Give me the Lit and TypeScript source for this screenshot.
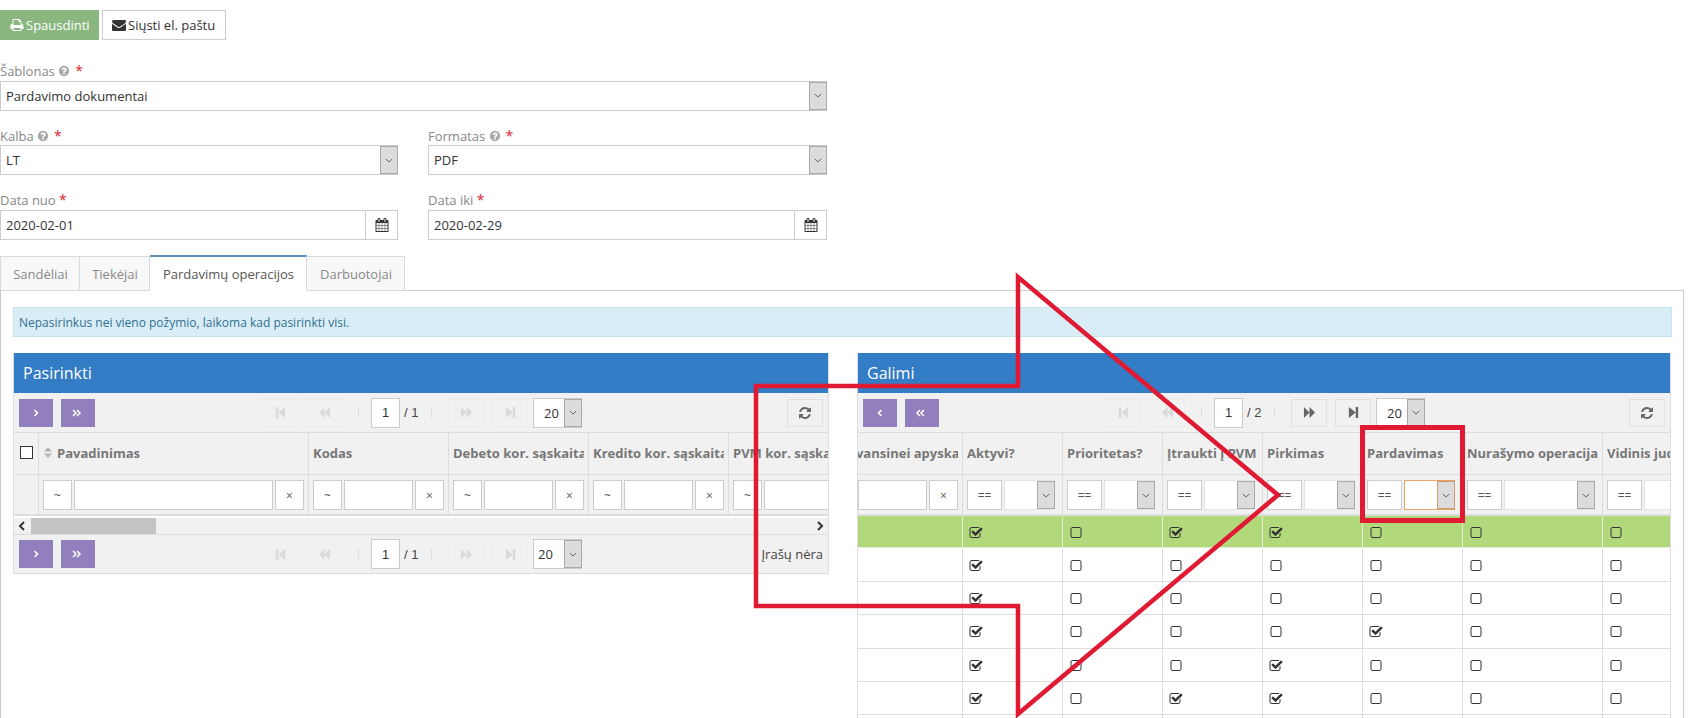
import { LitElement, html, css, svg } from "lit";
import { customElement } from "lit/decorators.js";

const P = {
  print: "M448 1536h896v-256h-896v256zm0-640h896v-384h-160q-40 0-68-28t-28-68v-160h-640v640zm1152 64q0-26-19-45t-45-19-45 19-19 45 19 45 45 19 45-19 19-45zm128 0v416q0 13-9.500 22.500t-22.500 9.500h-224v160q0 40-28 68t-68 28h-960q-40 0-68-28t-28-68v-160h-224q-13 0-22.500-9.500t-9.500-22.500v-416q0-79 56.500-135.500t135.500-56.500h64v-544q0-40 28-68t68-28h672q40 0 88 20t76 48l152 152q28 28 48 76t20 88v256h64q79 0 135.500 56.500t56.500 135.500z",
  mail: "M1792 710v794q0 66-47 113t-113 47h-1472q-66 0-113-47t-47-113v-794q44 49 101 87 362 246 497 345 57 42 92.500 65.500t94.500 48 110 24.500h2q51 0 110-24.500t94.500-48 92.500-65.500q170-123 498-345 57-39 100-87zm0-294q0 79-49 151t-122 123q-376 261-468 325-10 7-42.500 30.500t-54 38-52 32.500-57.500 27-50 9h-2q-23 0-50-9t-57.500-27-52-32.500-54-38-42.500-30.500q-91-64-262-182.500t-205-142.500q-62-42-117-115.500t-55-136.500q0-78 41.500-130t118.500-52h1472q65 0 112.500 47t47.500 113z",
  cal: "M192 1664h288v-288h-288v288zm352 0h320v-288h-320v288zm-352-352h288v-320h-288v320zm352 0h320v-320h-320v320zm-352-384h288v-288h-288v288zm736 736h320v-288h-320v288zm-384-736h320v-288h-320v288zm768 736h288v-288h-288v288zm-384-352h320v-320h-320v320zm-352-864v-288q0-13-9.500-22.500t-22.500-9.500h-64q-13 0-22.500 9.500t-9.500 22.500v288q0 13 9.500 22.500t22.500 9.500h64q13 0 22.500-9.500t9.500-22.500zm736 864h288v-320h-288v320zm-384-384h320v-288h-320v288zm384 0h288v-288h-288v288zm32-480v-288q0-13-9.500-22.500t-22.500-9.500h-64q-13 0-22.500 9.500t-9.500 22.500v288q0 13 9.500 22.500t22.500 9.500h64q13 0 22.500-9.500t9.500-22.500zm384-64v1280q0 52-38 90t-90 38h-1408q-52 0-90-38t-38-90v-1280q0-52 38-90t90-38h128v-96q0-66 47-113t113-47h64q66 0 113 47t47 113v96h384v-96q0-66 47-113t113-47h64q66 0 113 47t47 113v96h128q52 0 90 38t38 90z",
  help: "M1024 1376v-192q0-14-9-23t-23-9h-192q-14 0-23 9t-9 23v192q0 14 9 23t23 9h192q14 0 23-9t9-23zm256-672q0-88-55.500-163t-138.500-116-170-41q-243 0-371 213-15 24 8 42l132 100q7 6 19 6 16 0 25-12 53-68 86-92 34-24 86-24 48 0 85.500 26t37.500 59q0 38-20 61t-68 45q-63 28-115.500 86.500t-52.500 125.500v36q0 14 9 23t23 9h192q14 0 23-9t9-23q0-19 21.500-49.500t54.500-49.500q32-18 49-28.500t46-35 44.500-48 28-60.500 12.500-81zm384 192q0 209-103 385.500t-279.500 279.500-385.500 103-385.500-103-279.500-279.500-103-385.500 103-385.500 279.500-279.500 385.500-103 385.500 103 279.500 279.500 103 385.500z",
  refresh: "M1639 1056q0 5-1 7-64 268-268 434.500t-478 166.500q-146 0-282.500-55t-243.500-157l-129 129q-19 19-45 19t-45-19-19-45v-448q0-26 19-45t45-19h448q26 0 45 19t19 45-19 45l-137 137q71 66 161 102t187 36q134 0 250-65t186-179q11-17 53-117 8-23 30-23h192q13 0 22.500 9.500t9.500 22.500zm25-800v448q0 26-19 45t-45 19h-448q-26 0-45-19t-19-45 19-45l138-138q-148-137-349-137-134 0-250 65t-186 179q-11 17-53 117-8 23-30 23h-199q-13 0-22.500-9.500t-9.500-22.500v-7q65-268 270-434.500t480-166.500q146 0 284 55.500t245 156.500l130-129q19-19 45-19t45 19 19 45z",
  check: "M1472 930v318q0 119-84.500 203.500t-203.500 84.500h-832q-119 0-203.500-84.500t-84.500-203.500v-832q0-119 84.500-203.500t203.500-84.500h832q63 0 117 25 15 7 18 23 3 17-9 29l-49 49q-10 10-23 10-3 0-9-2-23-6-45-6h-832q-66 0-113 47t-47 113v832q0 66 47 113t113 47h832q66 0 113-47t47-113v-254q0-13 9-22l64-64q10-10 23-10 6 0 12 3 20 8 20 29zm231-489l-814 814q-24 24-57 24t-57-24l-430-430q-24-24-24-57t24-57l110-110q24-24 57-24t57 24l263 263 647-647q24-24 57-24t57 24l110 110q24 24 24 57t-24 57z",
  box: "M1312 256h-832q-66 0-113 47t-47 113v832q0 66 47 113t113 47h832q66 0 113-47t47-113v-832q0-66-47-113t-113-47zm288 160v832q0 119-84.500 203.500t-203.500 84.500h-832q-119 0-203.500-84.500t-84.500-203.500v-832q0-119 84.500-203.500t203.500-84.500h832q119 0 203.500 84.500t84.500 203.500z",
  first: "M2 1h2.600v12H2zM12 1v12L4.600 7z",
  prev: "M7 1v12L1 7zM13 1v12L7 7z",
  next: "M1 1v12l6-6zM7 1v12l6-6z",
  last: "M2 1v12l7.400-6zM9.400 1H12v12H9.400z",
};

const fa = (d: string, cls: string) =>
  html`<svg class=${cls} viewBox="0 0 1792 1792">${svg`<path d=${d}></path>`}</svg>`;
const nav = (d: string, off: boolean) =>
  html`<div class="navbtn ${off ? "off" : ""}"><svg class="navico" viewBox="0 0 14 14">${svg`<path d=${d}></path>`}</svg></div>`;
const chev = (pts: string) =>
  html`<svg class="chev" viewBox="0 0 10 10">${svg`<polyline points=${pts}></polyline>`}</svg>`;
const arrow = html`<span class="arrow"><svg class="dn" viewBox="0 0 10 6">${svg`<polyline points="1,1 5,5 9,1"></polyline>`}</svg></span>`;

const select = (text: string, extra = "") =>
  html`<div class="select ${extra}"><span class="seltext">${text}</span>${arrow}</div>`;

const dateField = (label: string, value: string) => html`
  <div class="field">
    <div class="label">${label} <span class="req">*</span></div>
    <div class="dateinput"><span class="seltext">${value}</span><span class="addon">${fa(P.cal, "calico")}</span></div>
  </div>`;
const selField = (label: string, value: string, cls = "") => html`
  <div class="field ${cls}">
    <div class="label">${label} ${fa(P.help, "helpico")}<span class="req gap">*</span></div>
    ${select(value, "big")}
  </div>`;

const pager = (total: string, enabledNext: boolean, footer: boolean) => html`
  <div class="pager">
    <div class="navs">${nav(P.first, true)}${nav(P.prev, true)}</div>
    <span class="sep lead"></span>
    <div class="pageinput">1</div>
    <span class="total">/ ${total}</span>
    <span class="sep trail"></span>
    <div class="navs">${nav(P.next, !enabledNext)}${nav(P.last, !enabledNext)}</div>
    ${select("20", footer ? "size foot" : "size")}
  </div>`;

const moveBtns = (left: boolean) => html`
  <div class="moves">
    <div class="move">${chev(left ? "6.500,2 3.500,5 6.500,8" : "3.500,2 6.500,5 3.500,8")}</div>
    <div class="move">${left ? chev("5,2 2,5 5,8") : chev("2,2 5,5 2,8")}${left ? chev("5,2 2,5 5,8") : chev("2,2 5,5 2,8")}</div>
  </div>`;

const textFilter = html`<div class="filter"><div class="fbtn op">~</div><div class="finput"></div><div class="fbtn x">×</div></div>`;
const boolFilter = (focus = false) =>
  html`<div class="filter"><div class="fbtn eq">==</div>${select("", focus ? "fsel focus" : "fsel")}</div>`;

const leftCols = [
  { w: 270, t: "Pavadinimas", sort: true },
  { w: 140, t: "Kodas" },
  { w: 140, t: "Debeto kor. sąskaita" },
  { w: 140, t: "Kredito kor. sąskaita" },
  { w: 140, t: "PVM kor. sąskaita" },
];

const rightCols = [
  { w: 100, t: "Aktyvi?" },
  { w: 100, t: "Prioritetas?" },
  { w: 100, t: "Įtraukti į PVM" },
  { w: 100, t: "Pirkimas" },
  { w: 100, t: "Pardavimas" },
  { w: 140, t: "Nurašymo operacija" },
  { w: 100, t: "Vidinis judėjimas" },
];
const rightRows = [
  [1, 0, 1, 1, 0, 0, 0],
  [1, 0, 0, 0, 0, 0, 0],
  [1, 0, 0, 0, 0, 0, 0],
  [1, 0, 0, 0, 1, 0, 0],
  [1, 0, 0, 1, 0, 0, 0],
  [1, 0, 1, 1, 0, 0, 0],
  [1, 0, 0, 0, 0, 0, 0],
];

@customElement("app-root")
export class AppRoot extends LitElement {
  static styles = css`
    :host {
      display: block;
      width: 1693px;
      height: 718px;
      overflow: hidden;
      position: relative;
      background: #fff;
      font-family: "Open Sans", sans-serif;
      font-size: 13px;
      color: #333;
    }
    .actions { display: flex; gap: 3px; padding-top: 10px; height: 30px; }
    .btn { display: flex; align-items: center; height: 30px; box-sizing: border-box; gap: 2px; }
    .btn.print { width: 99px; background: #8ab77f; color: #fff; padding-left: 10px; }
    .btn.mail { width: 124px; border: 1px solid #ccc; color: #333; padding-left: 9px; }
    .btnico { width: 14px; height: 14px; fill: currentColor; }
    .form { display: grid; grid-template-columns: 398px 399px; column-gap: 30px; row-gap: 15px; width: 827px; margin-top: 21px; }
    .wide { grid-column: 1 / 3; }
    .label { height: 19.500px; line-height: 20px; color: #888; font-size: 13px; white-space: nowrap; }
    .req { color: #e01b2f; font-size: 14px; }
    .req.gap { margin-left: 5px; }
    .helpico { width: 12px; height: 12px; fill: #a8a8a8; vertical-align: -1px; }
    .select { display: flex; box-sizing: border-box; background: #fff; border: 1px solid #ccc; height: 30px; align-items: stretch; }
    .seltext { flex: 1; display: flex; align-items: center; padding-left: 5px; color: #333; overflow: hidden; }
    .arrow { width: 18px; box-sizing: border-box; margin-right: -1px; background: #dcdcdc; border: 1px solid #a8a8a8; display: flex; align-items: center; justify-content: center; }
    .dn { width: 8px; height: 5px; fill: none; stroke: #444; stroke-width: 1; }
    .dateinput { display: flex; height: 30px; box-sizing: border-box; border: 1px solid #ccc; }
    .addon { width: 31px; border-left: 1px solid #ccc; display: flex; align-items: center; justify-content: center; }
    .calico { width: 14px; height: 14px; fill: #333; }

    .tabs { display: flex; margin-top: 16.500px; height: 35px; align-items: flex-end; position: relative; z-index: 1; }
    .tab { height: 35px; box-sizing: border-box; display: flex; align-items: center; justify-content: center; padding-left: 1px; color: #888; background: #f8f8f8; border: 1px solid #d6dadf; border-left: 0; }
    .tab.first { border-left: 1px solid #d6dadf; }
    .tab.active { height: 36px; background: #fff; color: #555; border-top: 2px solid #5f8fb5; border-bottom-color: #fff; }
    .pane { width: 1684px; height: 428px; box-sizing: border-box; margin-top: -1px; border: 1px solid #ccc; border-bottom: 0; padding: 16px 11px 0 12px; }
    .alert { height: 30px; box-sizing: border-box; background: #d9edf7; border: 1px solid #c5e5ee; color: #31708f; font-size: 12px; display: flex; align-items: center; padding-left: 5px; }
    .panels { display: grid; grid-template-columns: 816px 814px; column-gap: 28px; margin-top: 16px; align-items: start; }
    .panel { border: 1px solid #ddd; border-top: 0; overflow: hidden; }
    .title { height: 40px; margin: 0 -1px; padding-left: 10px; background: #337cc6; color: #fff; font-size: 16px; display: flex; align-items: center; }
    .bar { display: grid; grid-template-columns: 1fr auto 1fr; align-items: center; height: 39px; box-sizing: border-box; background: #f1f1f1; padding: 0 5px; }
    .bar.foot { border-top: 1px solid #ddd; height: 39px; }
    .moves { display: flex; gap: 8px; }
    .move { width: 34px; height: 28px; background: #9180bd; display: flex; align-items: center; justify-content: center; }
    .chev { width: 10px; height: 10px; fill: none; stroke: #fff; stroke-width: 1.500; }
    .move .chev + .chev { margin-left: -6px; }
    .pager { display: flex; align-items: center; padding-left: 2px; }
    .navs { display: flex; gap: 8px; }
    .navbtn { width: 36px; height: 28px; box-sizing: border-box; border: 1px solid #e2e2e2; display: flex; align-items: center; justify-content: center; }
    .navbtn.off { border-color: #ececec; }
    .navico { width: 13px; height: 13px; fill: #666; }
    .off .navico { fill: #dadada; }
    .sep { width: 1px; height: 10px; background: #dedede; }
    .sep.lead { margin: 0 12px 0 16px; }
    .sep.trail { margin: 0 16px 0 0; }
    .pageinput { width: 29px; height: 30px; box-sizing: border-box; background: #fff; border: 1px solid #ccc; display: flex; align-items: center; justify-content: center; font-family: "Liberation Sans", sans-serif; font-size: 13px; }
    .total { width: 31px; padding-left: 4px; box-sizing: border-box; font-size: 13px; font-family: "Liberation Sans", sans-serif; color: #444; }
    .size { width: 49px; margin-left: 5px; }
    .size .seltext { padding-left: 10px; }
    .size.foot .seltext { padding-left: 4px; }
    .refresh { justify-self: end; width: 36px; height: 28px; box-sizing: border-box; border: 1px solid #e2e2e2; display: flex; align-items: center; justify-content: center; }
    .refico { width: 14px; height: 14px; fill: #666; }
    .empty { justify-self: end; color: #444; white-space: nowrap; }

    .clip { overflow: hidden; }
    .grid { display: grid; width: max-content; }
    .head { height: 43px; box-sizing: border-box; border-top: 1px solid #ddd; border-bottom: 1px solid #ddd; border-right: 1px solid #ddd; background: #f1f1f1; color: #777; font-weight: 700; display: flex; align-items: center; padding: 0 4px 2px; white-space: nowrap; }
    .htext { overflow: hidden; flex: 1; min-width: 0; }
    .htext.shifted { padding-left: 20px; }
    .cbox { width: 13px; height: 13px; box-sizing: border-box; border: 1.500px solid #333; background: #fff; margin-left: 2px; flex: none; }
    .sorter { width: 8px; height: 11px; fill: #b4b4b4; margin: 0 5px 0 1px; flex: none; }
    .fcell { height: 41px; box-sizing: border-box; background: #f1f1f1; border-right: 1px solid #ddd; border-bottom: 2px solid #ddd; padding: 5px 4px 0; }
    .filter { display: flex; gap: 2px; height: 30px; }
    .fbtn { flex: none; box-sizing: border-box; height: 30px; background: #fff; border: 1px solid #ccc; display: flex; align-items: center; justify-content: center; color: #555; font-size: 12px; }
    .fbtn.op { width: 29px; }
    .fbtn.x { width: 29px; }
    .fbtn.eq { width: 35px; }
    .finput { flex: 1; min-width: 0; box-sizing: border-box; background: #fff; border: 1px solid #ccc; }
    .fsel { flex: 1; min-width: 0; margin-right: 3px; border-color: #e4e4e4; }
    .focus { border-color: #e6a468; }
    .focus .arrow { border-color: #d09a6c; }
    .cell { height: 33.400px; box-sizing: border-box; border-right: 1px solid #ddd; border-bottom: 1px solid #ddd; background: #fff; display: flex; align-items: center; padding: 2px 0 0 6px; }
    .cell.green { background: #b1d87a; border-color: #e4eed4; height: 32.400px; }
    .chk { width: 14px; height: 14px; fill: #333; }
    .sbar { height: 16px; margin-top: 2px; background: #f1f1f1; display: flex; align-items: center; justify-content: space-between; position: relative; padding: 0 3px; }
    .sthumb { position: absolute; left: 17px; top: 0; width: 125px; height: 16px; background: #c4c4c4; }
    .sarrow { width: 10px; height: 10px; fill: none; stroke: #333; stroke-width: 2; }

    .overlay { position: absolute; inset: 0; width: 1693px; height: 718px; pointer-events: none; }
  `;

  private table(isLeft: boolean) {
    const cols = isLeft ? leftCols : rightCols;
    const first = isLeft ? 25 : 140;
    const template = `${first}px ${cols.map((c) => c.w + "px").join(" ")}`;
    const offset = isLeft ? 0 : -35;
    return html`<div class="clip">
      <div class="grid" style="grid-template-columns:${template};margin-left:${offset}px">
        ${isLeft
          ? html`<div class="head"><span class="cbox"></span></div>`
          : html`<div class="head"><span class="htext shifted">Avansinei apyskaita</span></div>`}
        ${cols.map(
          (c: any) => html`<div class="head">
            ${c.sort
              ? html`<svg class="sorter" viewBox="0 0 8 11">${svg`<path d="M4 0l4 4.500H0zM0 6.500h8L4 11z"></path>`}</svg>`
              : ""}<span class="htext">${c.t}</span>
          </div>`
        )}
        ${isLeft
          ? html`<div class="fcell"></div>`
          : html`<div class="fcell">${textFilter}</div>`}
        ${cols.map(
          (c, i) => html`<div class="fcell">
            ${isLeft ? textFilter : boolFilter(i === 4)}
          </div>`
        )}
        ${isLeft
          ? ""
          : rightRows.map(
              (r, ri) => html`<div class="cell ${ri === 0 ? "green" : ""}"></div>
                ${r.map(
                  (v) => html`<div class="cell ${ri === 0 ? "green" : ""}">
                    ${fa(v ? P.check : P.box, "chk")}
                  </div>`
                )}`
            )}
      </div>
    </div>`;
  }

  render() {
    return html`
      <div class="actions">
        <div class="btn print">${fa(P.print, "btnico")}Spausdinti</div>
        <div class="btn mail">${fa(P.mail, "btnico")}Siųsti el. paštu</div>
      </div>
      <div class="form">
        ${selField("Šablonas", "Pardavimo dokumentai", "wide")}
        ${selField("Kalba", "LT")}
        ${selField("Formatas", "PDF")}
        ${dateField("Data nuo", "2020-02-01")}
        ${dateField("Data iki", "2020-02-29")}
      </div>
      <div class="tabs">
        <div class="tab first" style="width:80px">Sandėliai</div>
        <div class="tab" style="width:70px">Tiekėjai</div>
        <div class="tab active" style="width:157px">Pardavimų operacijos</div>
        <div class="tab" style="width:98px">Darbuotojai</div>
      </div>
      <div class="pane">
        <div class="alert">Nepasirinkus nei vieno požymio, laikoma kad pasirinkti visi.</div>
        <div class="panels">
          <div class="panel">
            <div class="title">Pasirinkti</div>
            <div class="bar">
              ${moveBtns(false)}
              ${pager("1", false, false)}
              <div class="refresh">${fa(P.refresh, "refico")}</div>
            </div>
            ${this.table(true)}
            <div class="sbar">
              <svg class="sarrow" viewBox="0 0 10 10">${svg`<polyline points="7,1 3,5 7,9"></polyline>`}</svg>
              <div class="sthumb"></div>
              <svg class="sarrow" viewBox="0 0 10 10">${svg`<polyline points="3,1 7,5 3,9"></polyline>`}</svg>
            </div>
            <div class="bar foot">
              ${moveBtns(false)}
              ${pager("1", false, true)}
              <div class="empty">Įrašų nėra</div>
            </div>
          </div>
          <div class="panel">
            <div class="title">Galimi</div>
            <div class="bar">
              ${moveBtns(true)}
              ${pager("2", true, false)}
              <div class="refresh">${fa(P.refresh, "refico")}</div>
            </div>
            ${this.table(false)}
          </div>
        </div>
      </div>
      <svg class="overlay" viewBox="0 0 1693 718">
        ${svg`
          <polygon points="1018,277 1018,386 756,386 756,606 1018,606 1018,714 1278,495" fill="none" stroke="#e01a32" stroke-width="4.500"></polygon>
          <rect x="1362.500" y="427.500" width="100" height="93" fill="none" stroke="#e01a32" stroke-width="5"></rect>
        `}
      </svg>
    `;
  }
}
